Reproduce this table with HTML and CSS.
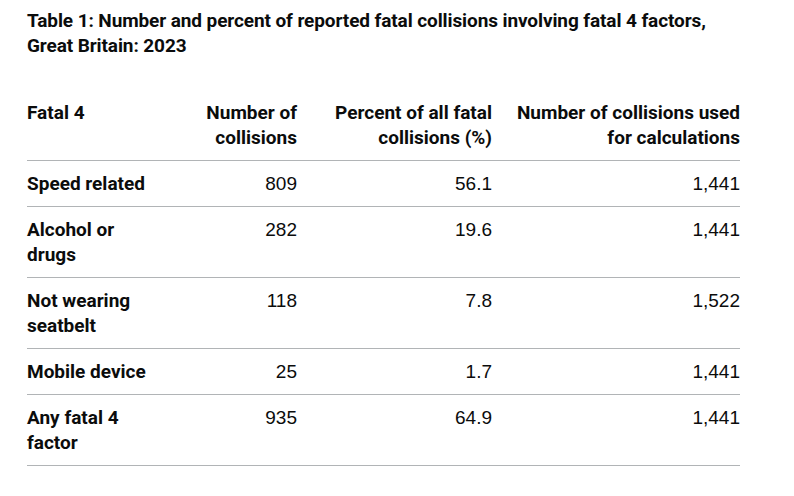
FILE: index.html
```html
<!DOCTYPE html>
<html lang="en">
<head>
<meta charset="utf-8">
<title>Fatal 4 factors, Great Britain: 2023</title>
<link rel="stylesheet" href="styles.css">
</head>
<body>
<main class="page">
  <h3 class="caption">Table 1: Number and percent of reported fatal collisions involving fatal 4 factors, Great Britain: 2023</h3>
  <table class="data">
    <thead>
      <tr>
        <th class="c1">Fatal 4</th>
        <th class="c2 num">Number of collisions</th>
        <th class="c3 num">Percent of all fatal collisions (%)</th>
        <th class="c4 num">Number of collisions used for calculations</th>
      </tr>
    </thead>
    <tbody>
      <tr><th>Speed related</th><td class="num">809</td><td class="num">56.1</td><td class="num">1,441</td></tr>
      <tr><th>Alcohol or drugs</th><td class="num">282</td><td class="num">19.6</td><td class="num">1,441</td></tr>
      <tr><th>Not wearing seatbelt</th><td class="num">118</td><td class="num">7.8</td><td class="num">1,522</td></tr>
      <tr><th>Mobile device</th><td class="num">25</td><td class="num">1.7</td><td class="num">1,441</td></tr>
      <tr><th>Any fatal 4 factor</th><td class="num">935</td><td class="num">64.9</td><td class="num">1,441</td></tr>
    </tbody>
  </table>
</main>
</body>
</html>
```

FILE: styles.css
```css
html, body {
  margin: 0;
  padding: 0;
  background: #ffffff;
}

body {
  color: #0b0c0c;
  font-family: "Liberation Sans", Arial, sans-serif;
  font-size: 19px;
  line-height: 25px;
}

.page {
  padding: 8px 27px 0 27px;
  width: 713px;
}

.caption {
  margin: 0 0 32px 0;
  font-family: Roboto, "Liberation Sans", sans-serif;
  font-weight: 700;
  font-size: 19px;
  line-height: 25px;
  letter-spacing: -0.1px;
}

.data {
  width: 713px;
  border-collapse: collapse;
  table-layout: fixed;
}

.data th,
.data td {
  box-sizing: border-box;
  padding: 10px 20px 10px 0;
  border-bottom: 1px solid #b1b4b6;
  vertical-align: top;
  text-align: left;
}

.data th {
  font-family: Roboto, "Liberation Sans", sans-serif;
  font-weight: 700;
}

.data td {
  font-weight: 400;
}

.data .num {
  text-align: right;
}

.data th:last-child,
.data td:last-child {
  padding-right: 0;
}

.c1 { width: 150px; }
.c2 { width: 140px; }
.c3 { width: 195px; }
.c4 { width: 228px; }
```
